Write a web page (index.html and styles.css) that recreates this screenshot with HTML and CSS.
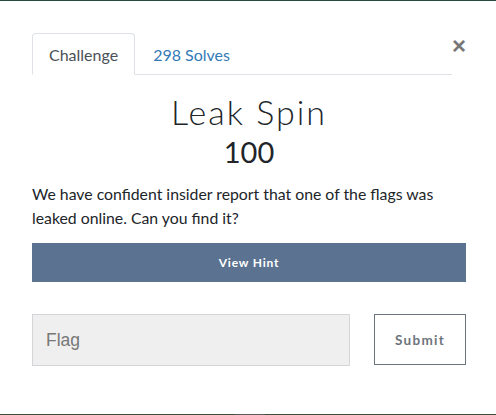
FILE: index.html
```html
<!DOCTYPE html>
<html>
<head>
<meta charset="utf-8">
<link rel="stylesheet" href="styles.css">
</head>
<body>
<div class="modal">
  <div class="head">
    <nav class="tabs">
      <span class="tab active">Challenge</span>
      <span class="tab link">298 Solves</span>
    </nav>
    <span class="close">&times;</span>
  </div>
  <h1 class="title">Leak Spin</h1>
  <div class="value">100</div>
  <p class="desc">We have confident insider report that one of the flags was leaked online. Can you find it?</p>
  <button class="hint">View Hint</button>
  <div class="submit-row">
    <input class="flag" type="text" placeholder="Flag">
    <button class="submit">Submit</button>
  </div>
</div>
<div class="bottom-line"><span class="seg"></span></div>
</body>
</html>
```
FILE: styles.css
```css
html, body {
  margin: 0;
  padding: 0;
  background: #fff;
  font-family: Lato, "Liberation Sans", sans-serif;
  color: #212529;
}
body {
  height: 415px;
  border-top: 1px solid #27493f;
  box-sizing: border-box;
  position: relative;
}
.modal {
  padding: 32px 30px 0 32px;
}
.head {
  display: flex;
  align-items: flex-start;
}
.tabs {
  display: flex;
  width: 420px;
  border-bottom: 1px solid #dee2e6;
}
.tab {
  font-size: 16px;
  line-height: 22px;
  padding: 10px 16px 8px 16px;
  margin-bottom: -1px;
  border: 1px solid transparent;
  border-radius: 4px 4px 0 0;
}
.tab.active {
  color: #495057;
  border-color: #dee2e6 #dee2e6 #fff;
  background: #fff;
}
.tab.link {
  color: #337ab7;
  padding-left: 17px;
}
.close {
  margin-left: auto;
  margin-right: 0;
  margin-top: 1px;
  width: 14px;
  text-align: center;
  font-family: "Liberation Sans", sans-serif;
  font-size: 24px;
  line-height: 24px;
  font-weight: bold;
  color: #777;
}
.title {
  margin: 17px 0 0;
  text-align: center;
  font-weight: 300;
  font-size: 34px;
  line-height: 40px;
  letter-spacing: 2px;
  color: #212529;
}
.value {
  text-align: center;
  font-size: 29px;
  line-height: 34px;
  margin-top: 3px;
  color: #212529;
}
.desc {
  margin: 13px 0 0;
  font-size: 15.8px;
  line-height: 24px;
  color: #212529;
}
.hint {
  display: block;
  width: 100%;
  margin-top: 13px;
  height: 39px;
  border: none;
  background: #5b7290;
  color: #fff;
  font-family: Lato, sans-serif;
  font-weight: bold;
  font-size: 12px;
  letter-spacing: 0.8px;
}
.submit-row {
  display: flex;
  justify-content: space-between;
  margin-top: 32px;
}
.flag {
  box-sizing: border-box;
  width: 318px;
  height: 52px;
  border: 1px solid #d3d5d8;
  background: #efefef;
  padding: 0 13px;
  font-family: "Liberation Sans", sans-serif;
  font-size: 17.5px;
  outline: none;
}
.flag::placeholder {
  color: #777;
}
.submit {
  box-sizing: border-box;
  width: 92px;
  height: 51px;
  border: 1px solid #6c757d;
  background: #fff;
  color: #6c757d;
  font-family: Lato, sans-serif;
  font-weight: bold;
  font-size: 13.5px;
  letter-spacing: 1.3px;
}
.bottom-line {
  position: absolute;
  left: 0;
  right: 0;
  top: 413px;
  height: 1px;
  background: #3d4f3a;
}
.seg {
  position: absolute;
  left: 235px;
  width: 30px;
  top: 0;
  height: 1px;
  background: #5a5a5a;
}
```
